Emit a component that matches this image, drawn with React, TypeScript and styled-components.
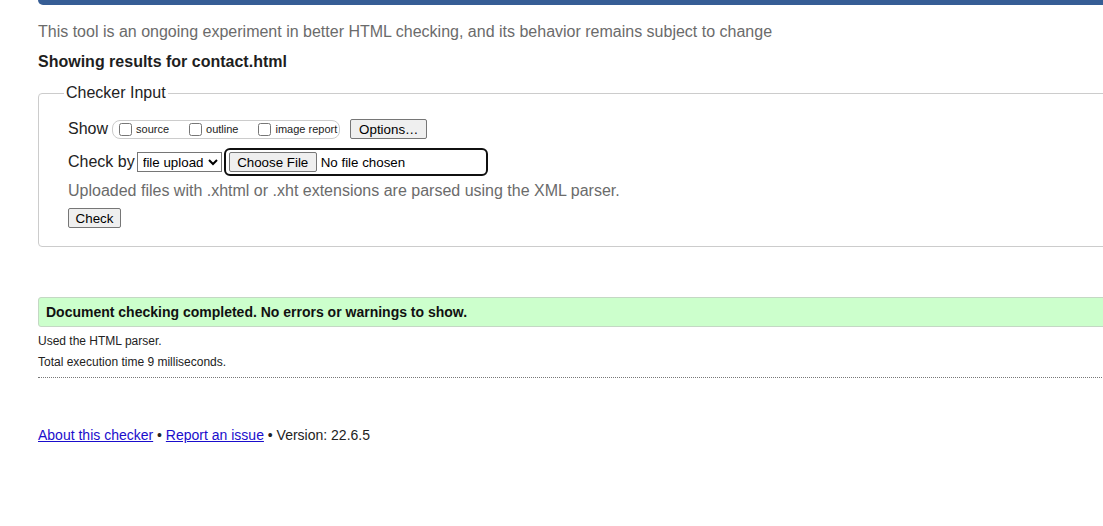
import React from "react";
import styled, { createGlobalStyle } from "styled-components";

const Global = createGlobalStyle`
  html, body { margin: 0; padding: 0; background: #fff; overflow: hidden; }
  body { font-family: "Liberation Sans", Arial, sans-serif; color: #222; }
`;

const Page = styled.div`
  width: 1300px;
  padding-left: 38px;
  box-sizing: border-box;
`;

const TopBar = styled.div`
  height: 5px;
  background: #365d95;
  border-bottom-left-radius: 6px;
`;

const Intro = styled.p`
  margin: 18px 0 0;
  font-size: 16px;
  line-height: 18px;
  color: #6b6b6b;
`;

const Heading = styled.h2`
  margin: 12px 0 0;
  font-size: 16px;
  line-height: 18px;
  font-weight: bold;
  color: #1e1e1e;
`;

const Fieldset = styled.fieldset`
  margin: 13px 0 0;
  padding: 15px 0 18px 29px;
  border: 1px solid #ccc;
  border-radius: 4px;
  min-width: 0;
`;

const Legend = styled.legend`
  margin-left: -4px;
  padding: 0 2px;
  font-size: 16px;
  line-height: 18px;
  color: #222;
`;

const Row = styled.div<{ $top?: number }>`
  display: flex;
  align-items: center;
  margin-top: ${(p) => p.$top ?? 0}px;
`;

const Label = styled.span`
  font-size: 16px;
  line-height: 18px;
  color: #222;
`;

const Pill = styled.span`
  display: inline-flex;
  align-items: center;
  height: 19px;
  box-sizing: border-box;
  margin-left: 4px;
  padding: 0 2px 0 6px;
  border: 1px solid #ccc;
  border-radius: 8px;
`;

const CheckItem = styled.label<{ $gap?: number }>`
  display: inline-flex;
  align-items: center;
  margin-left: ${(p) => p.$gap ?? 0}px;
  font-size: 11px;
  line-height: 13px;
  color: #222;
`;

const Box = styled.input`
  width: 13px;
  height: 13px;
  margin: 1px 4px 0 0;
`;

const NativeButton = styled.button<{ $w: number }>`
  width: ${(p) => p.$w}px;
  height: 20px;
  box-sizing: border-box;
  padding: 0;
  font-family: "Liberation Sans", Arial, sans-serif;
  font-size: 13.33px;
  color: #000;
  background: #efefef;
  border: 1px solid #767676;
  border-radius: 2px;
`;

const OptionsButton = styled(NativeButton)`
  margin-left: 10px;
`;

const Select = styled.select`
  margin-left: 2px;
  height: 20px;
  width: 85px;
  font-family: "Liberation Sans", Arial, sans-serif;
  font-size: 13.33px;
  color: #000;
  border: 1px solid #767676;
  border-radius: 0;
  background: #fff;
  padding: 0 0 0 1px;
`;

const FileBox = styled.div`
  display: flex;
  align-items: center;
  margin-left: 2px;
  width: 264px;
  height: 28px;
  box-sizing: border-box;
  border: 2px solid #101010;
  border-radius: 6px;
  padding-left: 3px;
`;

const FileName = styled.span`
  margin-left: 4px;
  font-size: 13.33px;
  color: #000;
`;

const Hint = styled.p`
  margin: 6px 0 0;
  font-size: 16px;
  line-height: 18px;
  color: #6b6b6b;
`;

const CheckRow = styled.div`
  margin-top: 8px;
  display: flex;
`;

const Success = styled.div`
  margin-top: 50px;
  height: 30px;
  box-sizing: border-box;
  display: flex;
  align-items: center;
  padding-left: 7px;
  background: #ccffcc;
  border: 1px solid #c4d8c4;
  border-radius: 3px;
  font-size: 14px;
  font-weight: bold;
  color: #111;
`;

const Detail = styled.p<{ $top: number }>`
  margin: ${(p) => p.$top}px 0 0;
  font-size: 12px;
  line-height: 14px;
  color: #222;
`;

const Dotted = styled.hr`
  margin: 8px 0 0;
  border: 0;
  border-top: 1px dotted #777;
  height: 0;
`;

const Footer = styled.p`
  margin: 49px 0 0;
  font-size: 14px;
  line-height: 16px;
  color: #222;
`;

const Link = styled.a`
  color: #1a0dcc;
  text-decoration: underline;
`;

export default function App() {
  return (
    <>
      <Global />
      <Page>
        <TopBar />
        <Intro>
          This tool is an ongoing experiment in better HTML checking, and its behavior remains subject to change
        </Intro>
        <Heading>Showing results for contact.html</Heading>
        <Fieldset>
          <Legend>Checker Input</Legend>
          <Row $top={2}>
            <Label>Show</Label>
            <Pill>
              <CheckItem>
                <Box type="checkbox" />
                source
              </CheckItem>
              <CheckItem $gap={20}>
                <Box type="checkbox" />
                outline
              </CheckItem>
              <CheckItem $gap={20}>
                <Box type="checkbox" />
                image report
              </CheckItem>
            </Pill>
            <OptionsButton $w={77} type="button">Options…</OptionsButton>
          </Row>
          <Row $top={9}>
            <Label>Check by</Label>
            <Select defaultValue="file">
              <option value="file">file upload</option>
              <option value="address">address</option>
              <option value="text">text input</option>
            </Select>
            <FileBox>
              <NativeButton $w={88} type="button">Choose File</NativeButton>
              <FileName>No file chosen</FileName>
            </FileBox>
          </Row>
          <Hint>Uploaded files with .xhtml or .xht extensions are parsed using the XML parser.</Hint>
          <CheckRow>
            <NativeButton $w={53} type="button">Check</NativeButton>
          </CheckRow>
        </Fieldset>
        <Success>Document checking completed. No errors or warnings to show.</Success>
        <Detail $top={7}>Used the HTML parser.</Detail>
        <Detail $top={7}>Total execution time 9 milliseconds.</Detail>
        <Dotted />
        <Footer>
          <Link href="#">About this checker</Link> • <Link href="#">Report an issue</Link> • Version: 22.6.5
        </Footer>
      </Page>
    </>
  );
}
